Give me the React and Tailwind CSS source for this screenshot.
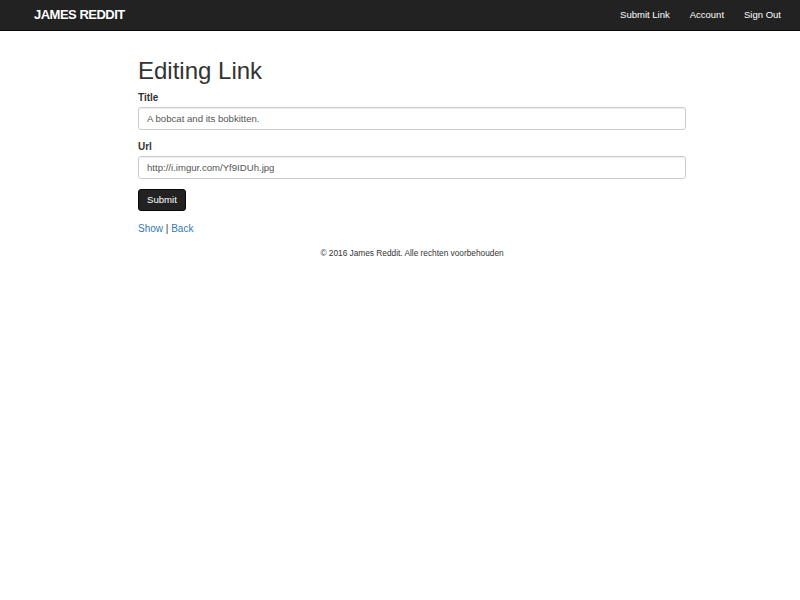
export default function App() {
  return (
    <div className="min-h-[600px] bg-white font-['Liberation_Sans',Arial,sans-serif] text-[#333]">
      <nav className="flex h-[31px] items-center justify-between border-b border-[#080808] bg-[#222] pl-[34px] pr-[19px]">
        <a className="text-[13px] font-bold tracking-[-0.5px] text-white">JAMES REDDIT</a>
        <div className="flex gap-[20px] text-[9.5px] text-white">
          <a>Submit Link</a>
          <a>Account</a>
          <a>Sign Out</a>
        </div>
      </nav>
      <div className="ml-[138px] w-[548px] pt-[25px]">
        <h1 className="text-[24px] leading-[30px] text-[#333]">Editing Link</h1>
        <form className="mt-[5px]">
          <label className="block text-[10px] font-bold leading-[13px]">Title</label>
          <input
            className="mt-[3px] block h-[23px] w-full rounded-[3px] border border-[#ccc] px-[8px] text-[9.6px] text-[#555] shadow-[inset_0_1px_1px_rgba(0,0,0,0.075)] outline-none"
            defaultValue="A bobcat and its bobkitten."
          />
          <label className="mt-[10px] block text-[10px] font-bold leading-[13px]">Url</label>
          <input
            className="mt-[3px] block h-[23px] w-full rounded-[3px] border border-[#ccc] px-[8px] text-[9.6px] text-[#555] shadow-[inset_0_1px_1px_rgba(0,0,0,0.075)] outline-none"
            defaultValue="http://i.imgur.com/Yf9IDUh.jpg"
          />
          <button
            type="button"
            className="mt-[10px] h-[22px] rounded-[3px] border border-[#080808] bg-[#222] px-[8px] text-[9.6px] text-white"
          >
            Submit
          </button>
        </form>
        <div className="mt-[11px] text-[10px] leading-[13px]">
          <a className="text-[#337ab7]">Show</a> | <a className="text-[#337ab7]">Back</a>
        </div>
        <footer className="mt-[13px] text-center text-[8.3px] leading-[10px]">
          © 2016 James Reddit. Alle rechten voorbehouden
        </footer>
      </div>
    </div>
  );
}
